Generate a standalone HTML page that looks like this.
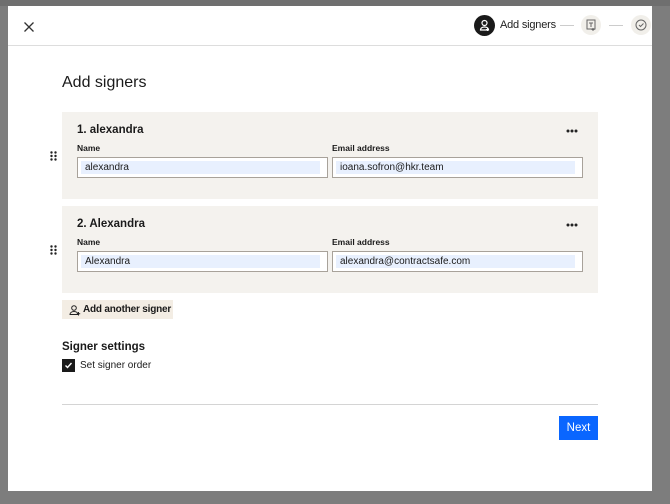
<!DOCTYPE html>
<html><head><style>
*{box-sizing:border-box;margin:0;padding:0}
body{width:670px;height:504px;background:#7d7d7d;font-family:"Liberation Sans",sans-serif;position:relative;overflow:hidden;color:#1a1a1a}
.bgtop{position:absolute;left:0;top:0;width:670px;height:6px;background:#6f6f6f}
.modal{position:absolute;left:8px;top:6px;width:644px;height:485px;background:#fff}
.hdr{position:absolute;left:0;top:0;width:644px;height:40px;border-bottom:1px solid #ddd}
.x{position:absolute;left:15px;top:14px;font-size:15px;color:#333}
.step{position:absolute;left:466px;top:9px;width:21px;height:21px;border-radius:50%;background:#1a1a1a}
.stlbl{position:absolute;left:492px;top:13px;font-size:11px;color:#222;letter-spacing:-0.2px}
.dash{position:absolute;top:19px;width:14px;height:1px;background:#ccc}
.circ{position:absolute;top:9px;width:20px;height:20px;border-radius:50%;background:#f1efea}
h1{position:absolute;left:54px;top:68px;font-size:16px;font-weight:normal}
.card{position:absolute;left:54px;width:536px;height:87px;background:#f4f2ee}
.card .t{position:absolute;left:15px;top:12px;font-size:11.5px;font-weight:bold}
.card .dots{position:absolute;right:20px;top:17px}
.lbl{position:absolute;top:31px;font-size:8.5px;font-weight:bold}
.in{position:absolute;top:45px;width:251px;height:21px;background:#fff;border:1px solid #a8a29a}
.in span{position:absolute;left:3px;top:3px;right:7px;height:13px;background:#e8f0fe;font-size:10px;padding-left:4px;line-height:13px}
.grip{position:absolute;left:42px}
.add{position:absolute;left:54px;top:294px;width:111px;height:19px;background:#f3ede4;font-size:10px;font-weight:bold;padding:4px 0 0 21px;letter-spacing:-0.2px}
h2{position:absolute;left:54px;top:335px;font-size:11.5px;font-weight:bold}
.cb{position:absolute;left:54px;top:353px;width:13px;height:13px;background:#1a1a1a}
.cbl{position:absolute;left:72px;top:354px;font-size:10px}
.hr{position:absolute;left:54px;top:398px;width:536px;height:1px;background:#d4d4d4}
.next{position:absolute;left:551px;top:410px;width:39px;height:24px;background:#0a66ff;color:#fff;font-size:11.5px;text-align:center;line-height:24px}
</style></head><body>
<div class="bgtop"></div>
<div class="modal">
<div class="hdr">
<div class="x"><svg width="12" height="12"><path d="M1.5 1.5l9 9M10.5 1.5l-9 9" stroke="#333" stroke-width="1.3"/></svg></div>
<div class="step"><svg width="21" height="21"><circle cx="10.5" cy="8" r="2.5" fill="none" stroke="#fff" stroke-width="1.2"/><path d="M6.5 15c0-4 8-4 8 0z" fill="none" stroke="#fff" stroke-width="1.2"/><path d="M13.5 13v3M12 14.5h3" stroke="#fff"/></svg></div>
<div class="stlbl">Add signers</div>
<div class="dash" style="left:552px"></div>
<div class="circ" style="left:573px"><svg width="20" height="20"><rect x="6" y="5" width="8" height="9" fill="none" stroke="#666" stroke-width="1"/><path d="M8 8h4M10 8v4M12 13v3M10.5 14.5h3" stroke="#666"/></svg></div>
<div class="dash" style="left:601px"></div>
<div class="circ" style="left:623px"><svg width="20" height="20"><circle cx="10" cy="10" r="5" fill="none" stroke="#666"/><path d="M8 10l1.5 1.5 3-3" fill="none" stroke="#666"/></svg></div>
</div>
<h1>Add signers</h1>
<svg class="grip" style="top:145px" width="8" height="10"><g fill="#222"><circle cx="1.5" cy="1.5" r="1.2"/><circle cx="5.5" cy="1.5" r="1.2"/><circle cx="1.5" cy="5" r="1.2"/><circle cx="5.5" cy="5" r="1.2"/><circle cx="1.5" cy="8.5" r="1.2"/><circle cx="5.5" cy="8.5" r="1.2"/></g></svg>
<div class="card" style="top:106px">
<div class="t">1. alexandra</div><svg class="dots" width="12" height="4"><g fill="#222"><circle cx="2" cy="2" r="1.5"/><circle cx="6" cy="2" r="1.5"/><circle cx="10" cy="2" r="1.5"/></g></svg>
<div class="lbl" style="left:15px">Name</div><div class="lbl" style="left:270px">Email address</div>
<div class="in" style="left:15px"><span>alexandra</span></div>
<div class="in" style="left:270px"><span>ioana.sofron@hkr.team</span></div>
</div>
<svg class="grip" style="top:239px" width="8" height="10"><g fill="#222"><circle cx="1.5" cy="1.5" r="1.2"/><circle cx="5.5" cy="1.5" r="1.2"/><circle cx="1.5" cy="5" r="1.2"/><circle cx="5.5" cy="5" r="1.2"/><circle cx="1.5" cy="8.5" r="1.2"/><circle cx="5.5" cy="8.5" r="1.2"/></g></svg>
<div class="card" style="top:200px">
<div class="t">2. Alexandra</div><svg class="dots" width="12" height="4"><g fill="#222"><circle cx="2" cy="2" r="1.5"/><circle cx="6" cy="2" r="1.5"/><circle cx="10" cy="2" r="1.5"/></g></svg>
<div class="lbl" style="left:15px">Name</div><div class="lbl" style="left:270px">Email address</div>
<div class="in" style="left:15px"><span>Alexandra</span></div>
<div class="in" style="left:270px"><span>alexandra@contractsafe.com</span></div>
</div>
<div class="add"><svg style="position:absolute;left:7px;top:4px" width="12" height="12"><circle cx="5" cy="4" r="2.3" fill="none" stroke="#222"/><path d="M1 10.5c0-4 8-4 8 0z" fill="none" stroke="#222"/><path d="M9.5 8v3.5M7.8 9.7h3.4" stroke="#222"/></svg>Add another signer</div>
<h2>Signer settings</h2>
<div class="cb"><svg width="13" height="13"><path d="M3.5 6.5l2 2 4-4.5" fill="none" stroke="#fff" stroke-width="1.4"/></svg></div><div class="cbl">Set signer order</div>
<div class="hr"></div>
<div class="next">Next</div>
</div>
</body></html>
